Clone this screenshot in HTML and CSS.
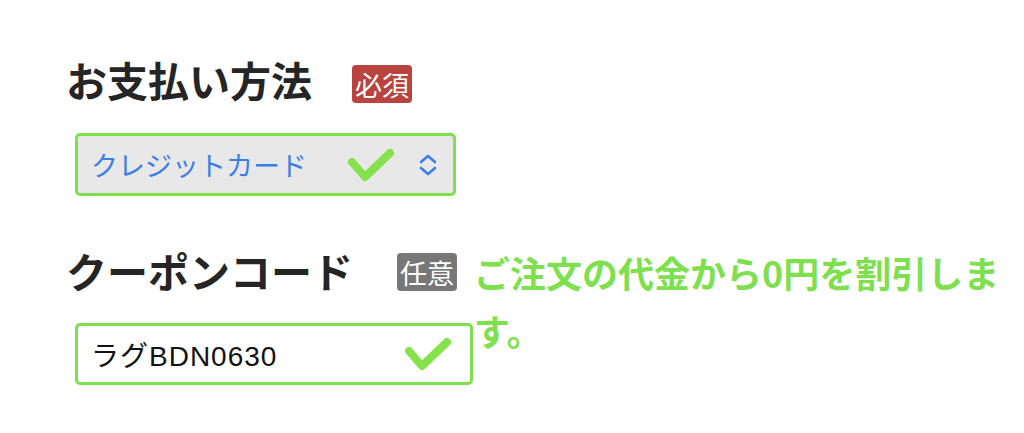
FILE: index.html
```html
<!DOCTYPE html>
<html lang="ja">
<head>
<meta charset="utf-8">
<link rel="stylesheet" href="styles.css">
</head>
<body>
<div class="page">
  <section class="field">
    <div class="field-head">
      <h2 class="field-title">お支払い方法</h2>
      <span class="badge badge-required">必須</span>
    </div>
    <div class="select-box">
      <span class="select-text">クレジットカード</span>
      <svg class="check check-select" width="48" height="36" viewBox="0 0 48 36"><polyline points="5,15 18,30 43,6" fill="none" stroke="#86e24c" stroke-width="8" stroke-linecap="round" stroke-linejoin="round"/></svg>
      <svg class="chevrons" width="20" height="24" viewBox="0 0 20 24"><polyline points="3,9 10,3 17,9" fill="none" stroke="#3b7fe6" stroke-width="2.6" stroke-linecap="round" stroke-linejoin="round"/><polyline points="3,15 10,21 17,15" fill="none" stroke="#3b7fe6" stroke-width="2.6" stroke-linecap="round" stroke-linejoin="round"/></svg>
    </div>
  </section>

  <section class="field field-coupon">
    <div class="coupon-main">
      <div class="field-head">
        <h2 class="field-title">クーポンコード</h2>
        <span class="badge badge-optional">任意</span>
      </div>
      <div class="input-box">
        <span class="input-text">ラグBDN0630</span>
        <svg class="check" width="48" height="36" viewBox="0 0 48 36"><polyline points="5,15 18,30 43,6" fill="none" stroke="#86e24c" stroke-width="8" stroke-linecap="round" stroke-linejoin="round"/></svg>
      </div>
    </div>
    <p class="coupon-message">ご注文の代金から0円を割引します。</p>
  </section>
</div>
</body>
</html>
```

FILE: styles.css
```css
html, body {
  margin: 0;
  padding: 0;
  background: #ffffff;
}

body {
  font-family: "Noto Sans CJK JP", "Noto Sans", sans-serif;
  color: #222222;
}

.page {
  padding: 52px 0 0 66px;
}

.field-head {
  display: flex;
  align-items: center;
  height: 54px;
}

.field-title {
  margin: 0;
  font-size: 41px;
  font-weight: 700;
  line-height: 54px;
  color: #252525;
  letter-spacing: 0;
}

.badge {
  display: inline-flex;
  align-items: center;
  justify-content: center;
  width: 60px;
  height: 38px;
  border-radius: 4px;
  color: #ffffff;
  font-size: 27px;
  line-height: 1;
  margin-left: 40px;
}

.badge-required {
  background: #b9433f;
  margin-top: 10px;
}

.badge-optional {
  background: #777777;
  margin-left: 44px;
  margin-top: 4px;
}

.select-box {
  box-sizing: border-box;
  margin: 27px 0 0 9px;
  width: 381px;
  height: 63px;
  border: 3px solid #7fe04f;
  border-radius: 5px;
  background: #e8e8e8;
  display: flex;
  align-items: center;
  padding: 0 15px 0 13px;
}

.select-text {
  flex: 1;
  font-size: 27px;
  color: #3b7fe6;
  letter-spacing: 0;
}

.check-select {
  margin-right: 23px;
}

.field-coupon {
  margin-top: 47px;
  display: flex;
  align-items: flex-start;
}

.coupon-main {
  width: 410px;
  flex: none;
}

.input-box {
  box-sizing: border-box;
  margin: 26px 0 0 9px;
  width: 398px;
  height: 62px;
  border: 3px solid #7fe04f;
  border-radius: 5px;
  background: #ffffff;
  display: flex;
  align-items: center;
  padding: 0 18px 0 13px;
}

.input-text {
  flex: 1;
  font-family: "Liberation Sans", "Noto Sans CJK JP", sans-serif;
  font-size: 28px;
  letter-spacing: 1px;
  color: #111111;
}

.coupon-message {
  margin: 0 0 0 -2px;
  flex: 1;
  padding-right: 14px;
  font-size: 36px;
  font-weight: 700;
  line-height: 58px;
  color: #7fe04f;
}
```
